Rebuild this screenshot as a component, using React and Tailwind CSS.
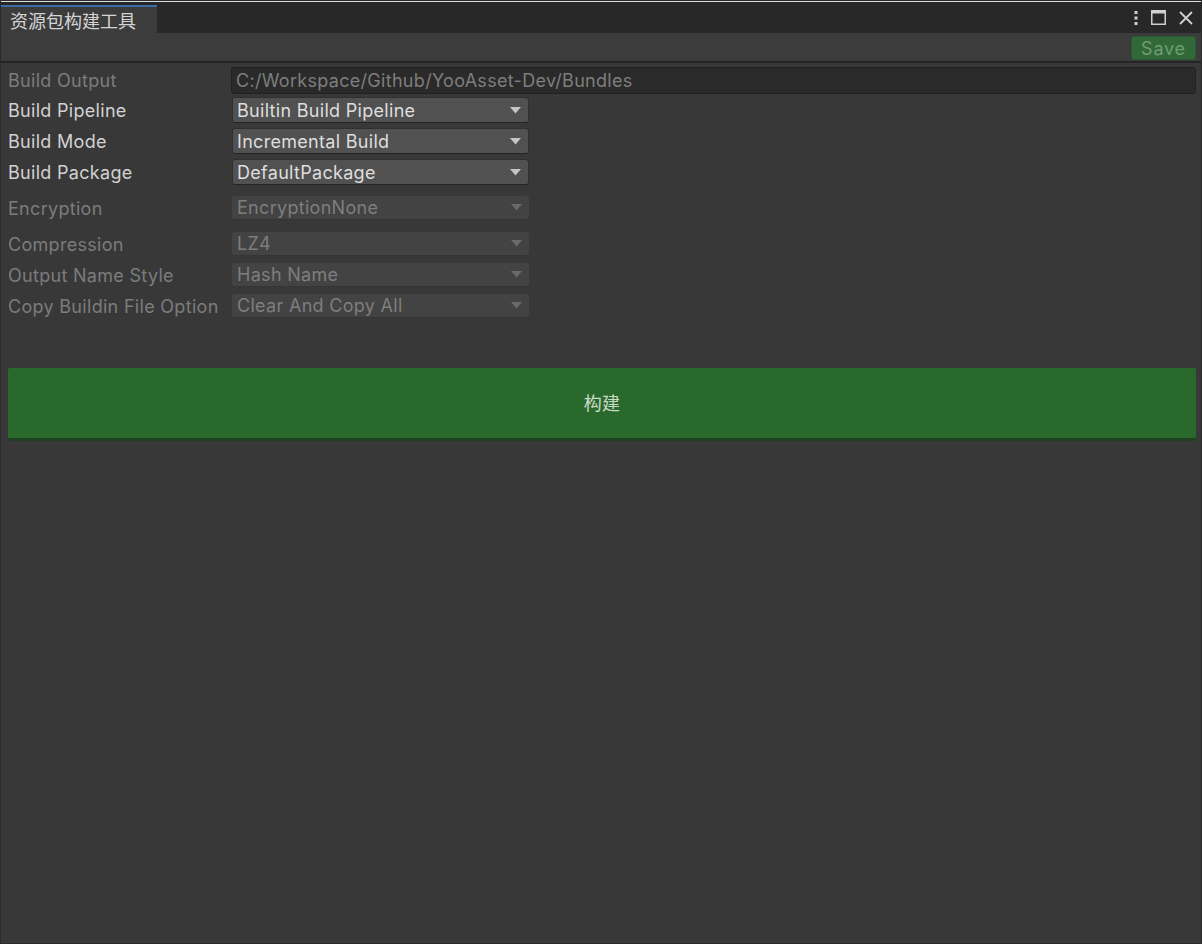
import React from "react";

const Arrow = ({ dim }) => (
  <svg width="11" height="7" viewBox="0 0 11 7" className="shrink-0">
    <polygon points="0,0 11,0 5.5,6.5" fill={dim ? "#6a6a6a" : "#c4c4c4"} />
  </svg>
);

const Dropdown = ({ value, dim }) =>
  dim ? (
    <div className="ml-[1px] w-[297px] h-full flex items-center justify-between pl-[5px] pr-[7px] rounded-[3px] bg-[#434343] border-b border-[#353535] text-[#7e7e7e]">
      <span>{value}</span>
      <Arrow dim />
    </div>
  ) : (
    <div className="ml-[1px] w-[297px] h-full flex items-center justify-between pl-[4px] pr-[7px] rounded-[3px] bg-[#515151] border border-[#303030] border-b-[#242424] text-[#dedede]">
      <span>{value}</span>
      <Arrow />
    </div>
  );

const Row = ({ label, value, dim, h, mt }) => (
  <div className={`flex items-center ${h} ${mt}`}>
    <div className={`w-[230px] pl-[7px] whitespace-nowrap ${dim ? "text-[#7c7c7c]" : "text-[#d2d2d2]"}`}>{label}</div>
    <Dropdown value={value} dim={dim} />
  </div>
);

export default function App() {
  return (
    <div
      className="w-[1202px] h-[944px] bg-[#383838] flex flex-col overflow-hidden text-[18px] tracking-[0.3px] border-l border-r border-b border-[#2a2a2a]"
      style={{ fontFamily: 'Inter, "Noto Sans CJK SC", sans-serif' }}
    >
      <div className="h-[1px] bg-[#2b2b2b]" />
      <div className="h-[1px] bg-[#dcdcdc]" />
      {/* tab bar */}
      <div className="h-[31px] bg-[#282828] flex items-end">
        <div className="w-[156px] h-[28px] bg-[#3c3c3c] border-t-2 border-[#3a6ea5] flex items-center pt-[2px] pl-[9px] text-[#d4d4d4] text-[18px] tracking-normal">
          资源包构建工具
        </div>
        <div className="flex-1" />
        <div className="self-center flex items-center gap-[13px] pr-[8px] text-[#d0d0d0]">
          <svg width="4" height="14" viewBox="0 0 4 14">
            <rect x="0.5" y="0" width="3" height="3" fill="#d0d0d0" />
            <rect x="0.5" y="5.5" width="3" height="3" fill="#d0d0d0" />
            <rect x="0.5" y="11" width="3" height="3" fill="#d0d0d0" />
          </svg>
          <svg width="15" height="15" viewBox="0 0 15 15">
            <rect x="0.75" y="0.75" width="13.5" height="13.5" fill="none" stroke="#d0d0d0" strokeWidth="1.5" />
            <rect x="0" y="0" width="15" height="3.5" fill="#d0d0d0" />
          </svg>
          <svg width="14" height="14" viewBox="0 0 14 14">
            <path d="M1 1 L13 13 M13 1 L1 13" stroke="#d0d0d0" strokeWidth="1.8" />
          </svg>
        </div>
      </div>
      {/* toolbar */}
      <div className="h-[30px] bg-[#3c3c3c] border-b-2 border-[#242424] flex items-start pt-[3px] justify-end pr-[5px]">
        <div className="w-[65px] h-[24px] rounded-[3px] bg-[#31683a] border border-[#2a5a2e] flex items-center justify-center text-[#6f9d72] text-[18px] tracking-[0.8px]">
          Save
        </div>
      </div>
      {/* content */}
      <div className="flex items-center h-[27px] mt-[4px]">
        <div className="w-[230px] pl-[7px] text-[#7c7c7c]">Build Output</div>
        <div className="w-[965px] h-full flex items-center pl-[4px] rounded-[3px] bg-[#2a2a2a] border border-[#212121] text-[#7e7e7e]">
          C:/Workspace/Github/YooAsset-Dev/Bundles
        </div>
      </div>
      <Row label="Build Pipeline" value="Builtin Build Pipeline" h="h-[26px]" mt="mt-[3px]" />
      <Row label="Build Mode" value="Incremental Build" h="h-[26px]" mt="mt-[5px]" />
      <Row label="Build Package" value="DefaultPackage" h="h-[26px]" mt="mt-[5px]" />
      <Row label="Encryption" value="EncryptionNone" dim h="h-[24px]" mt="mt-[11px]" />
      <Row label="Compression" value="LZ4" dim h="h-[24px]" mt="mt-[12px]" />
      <Row label="Output Name Style" value="Hash Name" dim h="h-[24px]" mt="mt-[7px]" />
      <Row label="Copy Buildin File Option" value="Clear And Copy All" dim h="h-[24px]" mt="mt-[7px]" />
      <div className="mt-[50px] ml-[7px] mr-[5px] h-[73px] bg-[#296a2c] border-b-[3px] border-[#1f3f21] rounded-[2px] flex items-center justify-center text-[#c9d9c9] text-[18px]">
        构建
      </div>
    </div>
  );
}
